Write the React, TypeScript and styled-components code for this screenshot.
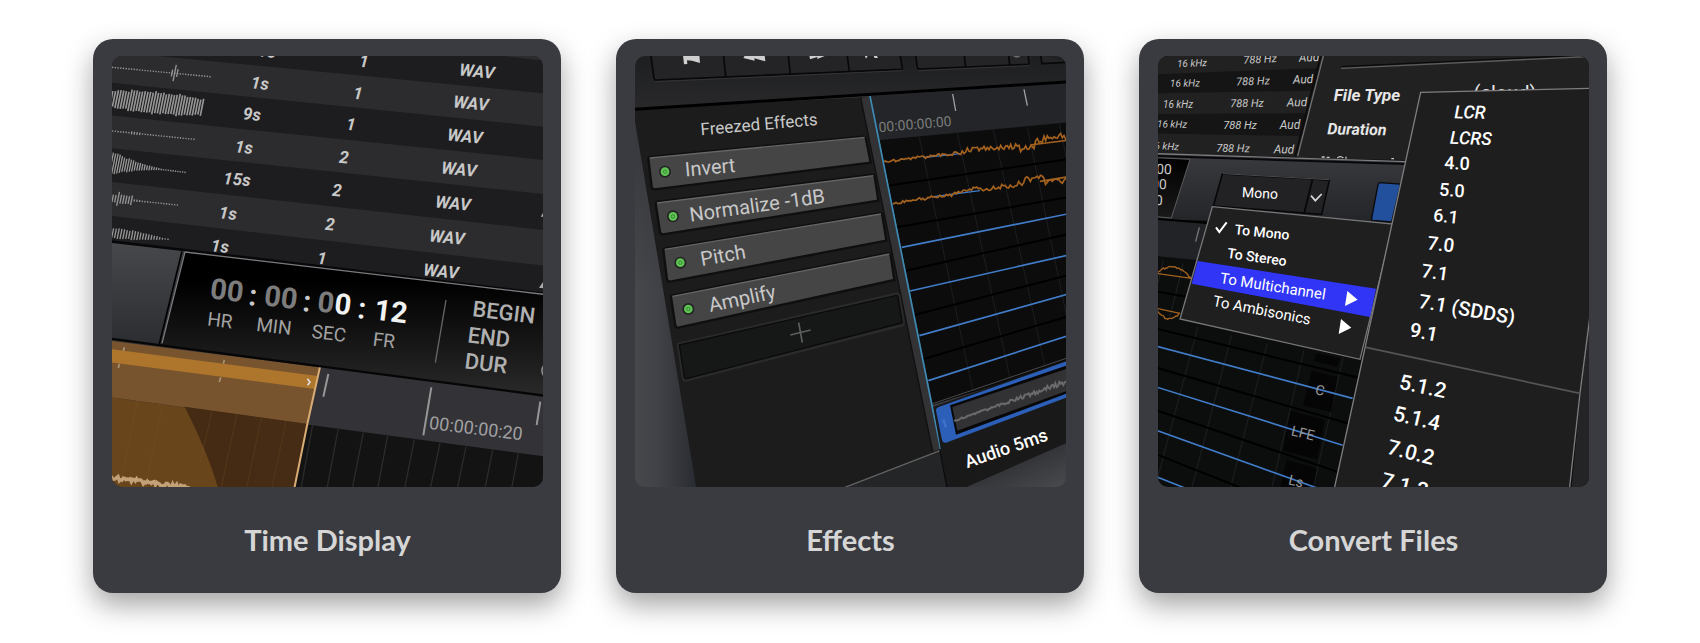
import React from "react";
import styled, { createGlobalStyle } from "styled-components";

const GlobalStyle = createGlobalStyle`
  * { box-sizing: border-box; }
  body { margin: 0; background: #fff; }
`;

const Gallery = styled.main`
  display: grid;
  grid-template-columns: repeat(3, minmax(0, 1fr));
  gap: 55px;
  padding: 39px 93px 50px;
`;

const Card = styled.article`
  display: flex;
  flex-direction: column;
  padding: 17px 18px 0 19px;
  border-radius: 20px;
  background: #3a3b40;
  box-shadow: 0 12px 28px rgba(0, 0, 0, 0.36);
`;

const Title = styled.h2`
  margin: 0;
  padding: 35px 0;
  font-family: Lato, "Open Sans", sans-serif;
  font-size: 29px;
  font-weight: 700;
  line-height: 36px;
  text-align: center;
  color: #d6d6d6;
`;

const Picture = styled.svg`
  display: block;
  width: 100%;
  height: auto;
  border-radius: 10px;
  font-family: Roboto, "Liberation Sans", sans-serif;
`;

interface InkProps {
  $size: number;
  $color: string;
  $weight: number;
  $italic: boolean;
}

const Ink = styled.text<InkProps>`
  font-size: ${(p) => p.$size}px;
  font-weight: ${(p) => p.$weight};
  font-style: ${(p) => (p.$italic ? "italic" : "normal")};
  fill: ${(p) => p.$color};
  text-anchor: middle;
`;

interface LabelProps {
  at: [number, number];
  turn?: number;
  size?: number;
  color?: string;
  weight?: number;
  italic?: boolean;
  children: string;
}

/* Text centred on a point and turned to the slope of its surface */
const Label = ({ at, turn = 0, size = 18, color = "#c8c8c8", weight = 400, italic = false, children }: LabelProps) => (
  <Ink
    transform={`translate(${at[0]} ${at[1]}) rotate(${turn})`}
    dy="0.36em"
    $size={size}
    $color={color}
    $weight={weight}
    $italic={italic}
  >
    {children}
  </Ink>
);

/* Shapes are drawn on a grid three times finer than the labels */
const Fine = ({ left, children }: { left: number; children: React.ReactNode }) => (
  <g transform={`translate(${-left} -26) scale(0.33333)`}>{children}</g>
);

type Pt = [number, number];

const noise = (i: number) => {
  const v = Math.sin(i * 12.9898 + 4.1) * 43758.5453;
  return v - Math.floor(v);
};

/* Leaning bars between two points, as tall as the envelope says */
const bars = (a: Pt, b: Pt, step: number, height: (t: number) => number, lean = 0.2) => {
  let d = "";
  const n = Math.floor((b[0] - a[0]) / step);
  for (let i = 0; i <= n; i++) {
    const t = i / n;
    const x = a[0] + (b[0] - a[0]) * t;
    const y = a[1] + (b[1] - a[1]) * t;
    const h = Math.max(2, height(t) * (0.85 + noise(i) * 0.25));
    d += `M${(x + h * lean).toFixed(1)} ${(y - h).toFixed(1)}L${(x - h * lean).toFixed(1)} ${(y + h).toFixed(1)}`;
  }
  return d;
};

/* A jagged trace along a line */
const trace = (a: Pt, b: Pt, step: number, offset: (t: number, i: number) => number) => {
  const n = Math.floor((b[0] - a[0]) / step);
  const pts: string[] = [];
  for (let i = 0; i <= n; i++) {
    const t = i / n;
    pts.push(`${(a[0] + (b[0] - a[0]) * t).toFixed(1)} ${(a[1] + (b[1] - a[1]) * t + offset(t, i)).toFixed(1)}`);
  }
  return "M" + pts.join("L");
};

const durations: [string, number, number][] = [
  ["1s", 156, -5], ["1s", 149, 27], ["9s", 141, 58], ["1s", 133, 91], ["15s", 126, 123], ["1s", 117, 157], ["1s", 109, 190],
];
const channels: [string, number, number][] = [
  ["1", 253, 5], ["1", 247, 37], ["1", 240, 68], ["2", 233, 101], ["2", 226, 134], ["2", 219, 168], ["1", 211, 202],
];
const formats: Pt[] = [[366, 15], [360, 47], [354, 80], [348, 113], [342, 147], [336, 181], [330, 215]];

const TimePicture = () => (
  <Picture viewBox="1 0 431 431" role="img" aria-label="Time display">
    <defs>
      <linearGradient id="tdPanel" x1="0" y1="0" x2="0" y2="1">
        <stop offset="0.2" stopColor="#000" />
        <stop offset="1" stopColor="#2a2a2a" />
      </linearGradient>
      <linearGradient id="tdBar" x1="0" y1="0" x2="0" y2="1">
        <stop offset="0" stopColor="#47484c" />
        <stop offset="1" stopColor="#2c2d31" />
      </linearGradient>
    </defs>
    <Fine left={21}>
      <rect x="60" y="70" width="1310" height="1310" fill="#1d1d1f" />
      <path d="M60 64L1370 191V291L60 158ZM60 256L1370 391V493L60 354ZM60 455L1370 601V708L60 557ZM1240 78H1370V93Z" fill="#2c2c2e" />
      <g stroke="#969696" strokeWidth="4" fill="none">
        <path d={bars([68, 112], [360, 140], 8, () => 2)} />
        <path d={bars([246, 129], [262, 129], 8, (t) => (t > 0.4 && t < 0.6 ? 26 : 11))} />
        <path d={bars([64, 206], [336, 232], 8, (t) => 24 + 9 * Math.sin(t * 3.1))} strokeWidth="5" />
        <path d={bars([68, 303], [312, 328], 8, (t) => (t > 0.2 && t < 0.35 ? 4 : 2))} />
        <path d={bars([64, 400], [285, 427], 7, (t) => 34 * Math.pow(1 - t, 2.2))} />
        <path d={bars([68, 505], [262, 525], 8, (t) => (t < 0.06 ? 12 : t < 0.12 ? 20 : t < 0.3 ? 13 : 5 * (1 - t)))} />
        <path d={bars([68, 609], [234, 628], 8, (t) => 15 * (1 - t * t))} />
      </g>
    </Fine>
    {durations.map(([t, x, y]) => <Label key={y} at={[x, y]} turn={5} size={17} weight={700} italic>{t}</Label>)}
    {channels.map(([t, x, y]) => <Label key={y} at={[x, y]} turn={5} size={17} weight={700} italic>{t}</Label>)}
    {formats.map(([x, y]) => <Label key={y} at={[x, y]} turn={6} size={17} weight={700} italic>WAV</Label>)}
    <Fine left={21}>
      <path d="M1362 544L1352 560H1370ZM1362 752L1347 773L1370 777Z" fill="#aaa" />
      <path d="M60 636L283 662L215 945L60 930Z" fill="url(#tdBar)" />
      <path d="M60 634L283 660L1370 792" stroke="#08080a" strokeWidth="8" fill="none" />
      <path d="M285 666L1370 796V1102L213 944Z" fill="url(#tdPanel)" />
      <path d="M1370 794L285 666L216 940" stroke="#7a7a7e" strokeWidth="4" fill="none" />
      <path d="M276 664L208 942" stroke="#000" strokeWidth="5" />
      <path d="M1068 810L1036 998" stroke="#666" strokeWidth="4" />
      <path d="M60 928L1370 1098V1380H60Z" fill="#333237" />
      <path d="M640 1182L1370 1280V1380H600Z" fill="#131313" />
      <path d="M668 1185L632 1380M745 1195L710 1380M820 1207L786 1380M893 1217L862 1380M973 1228L943 1380M1050 1239L1020 1380M1128 1250L1101 1380M1208 1260L1184 1380M1285 1270L1264 1380" stroke="#2b2b2b" strokeWidth="4" />
      <path d="M60 932L690 1012L652 1182L60 1102Z" fill="#77542d" />
      <path d="M60 957L683 1038L674 1077L60 997Z" fill="#ae762d" />
      <path d="M60 1102L652 1182L612 1380H60Z" fill="#68451c" />
      <path d="M284 1130L652 1182L612 1380H386Q355 1270 284 1130Z" fill="#462c14" />
      <path d="M142 1112L90 1372M218 1122L166 1372M440 1154L394 1372M514 1164L470 1372M588 1174L546 1372M366 1144L330 1300" stroke="#8a6232" strokeWidth="3" opacity="0.2" />
      <path d="M103 952L100 963M88 1002L85 1014M403 990L400 1001M392 1042L388 1056" stroke="#a89474" strokeWidth="5" />
      <path d={trace([60, 1342], [300, 1374], 4, (_, i) => (noise(i) - 0.5) * 14)} stroke="#c2a078" strokeWidth="10" fill="none" />
      <path d="M652 1046L660 1056L653 1066" stroke="#ddd" strokeWidth="5" fill="none" />
      <path d="M690 1010L652 1182L612 1380" stroke="#d8ac74" strokeWidth="6" fill="none" />
      <path d="M60 926L1370 1098" stroke="#060606" strokeWidth="7" />
      <path d="M715 1032L700 1100M1024 1072L1000 1216M1351 1115L1340 1185" stroke="#969696" strokeWidth="6" />
      <path d="M1364 1004Q1350 1018 1360 1036" stroke="#8a8a8a" strokeWidth="5" fill="none" />
    </Fine>
    <Label at={[116, 234]} turn={7} size={29} weight={700} color="#7d7d7d">00</Label>
    <Label at={[142, 239]} turn={7} size={29} weight={700} color="#c9c9c9">:</Label>
    <Label at={[170, 241]} turn={7} size={29} weight={700} color="#7d7d7d">00</Label>
    <Label at={[196, 245]} turn={7} size={29} weight={700} color="#c9c9c9">:</Label>
    <Label at={[215, 246]} turn={7} size={29} weight={700} color="#7d7d7d">0</Label>
    <Label at={[232, 248]} turn={7} size={29} weight={700} color="#f2f2f2">0</Label>
    <Label at={[251, 252]} turn={7} size={29} weight={700} color="#f2f2f2">:</Label>
    <Label at={[280, 255]} turn={7} size={29} weight={700} color="#f2f2f2">12</Label>
    <Label at={[109, 264]} turn={7} size={19} color="#a2a2a2">HR</Label>
    <Label at={[163, 270]} turn={7} size={19} color="#a2a2a2">MIN</Label>
    <Label at={[218, 277]} turn={7} size={19} color="#a2a2a2">SEC</Label>
    <Label at={[273, 284]} turn={7} size={19} color="#a2a2a2">FR</Label>
    <Label at={[393, 256]} turn={7} size={22} weight={500} color="#b0b0b0">BEGIN</Label>
    <Label at={[378, 281]} turn={7} size={22} weight={500} color="#b0b0b0">END</Label>
    <Label at={[375, 307]} turn={7} size={22} weight={500} color="#b0b0b0">DUR</Label>
    <Label at={[365, 372]} turn={7} color="#a0a0a0">00:00:00:20</Label>
  </Picture>
);

const effectRows = [
  { box: "M115 385Q115 382 120 381L758 320Q766 319 768 326L782 398L134 478Q127 478 125 470Z", top: "M119 384L764 322", led: [165, 425] },
  { box: "M137 520Q137 517 142 516L785 434Q792 434 794 440L805 512L159 613Q152 613 150 606Z", top: "M141 519L790 437", led: [189, 559] },
  { box: "M160 660Q160 657 165 655L808 550Q815 549 817 556L829 632L180 755Q173 755 171 748Z", top: "M164 658L813 552", led: [211, 698] },
  { box: "M183 801Q183 797 188 796L833 670Q840 669 842 676L853 750L205 893Q198 894 196 887Z", top: "M187 799L838 672", led: [235, 837] },
];

const EffectsPicture = () => (
  <Picture viewBox="1 0 431 431" role="img" aria-label="Effects">
    <defs>
      <linearGradient id="fxSide" x1="0" y1="0" x2="1" y2="0">
        <stop offset="0" stopColor="#48494c" />
        <stop offset="0.4" stopColor="#414247" />
        <stop offset="1" stopColor="#272a30" />
      </linearGradient>
      <linearGradient id="fxShade" x1="0" y1="0" x2="0" y2="1">
        <stop offset="0" stopColor="#34353a" />
        <stop offset="0.5" stopColor="#34353a" stopOpacity="0" />
      </linearGradient>
      <linearGradient id="fxBar" x1="0" y1="0" x2="0" y2="1">
        <stop offset="0" stopColor="#1d1e20" />
        <stop offset="1" stopColor="#29292c" />
      </linearGradient>
      <linearGradient id="fxCorner" x1="0" y1="0" x2="1" y2="1">
        <stop offset="0.2" stopColor="#26272a" />
        <stop offset="1" stopColor="#4b4c50" />
      </linearGradient>
    </defs>
    <Fine left={24}>
      <rect x="66" y="200" width="200" height="1180" fill="url(#fxSide)" />
      <rect x="66" y="200" width="200" height="1180" fill="url(#fxShade)" />
      <path d="M66 70H1372V157L66 238Z" fill="url(#fxBar)" />
      <g fill="#242426" stroke="#080808" strokeWidth="5">
        <path d="M122 70L132 145Q133 151 140 150L872 118Q878 117 877 112L869 70Z" />
        <path d="M340 70L347 140M534 70L541 132M711 70L718 124" />
        <path d="M916 70L922 112Q923 118 930 117L1252 103Q1258 102 1257 97L1253 70Z" />
        <path d="M1062 70L1067 111M1195 70L1199 105M1291 70L1296 101L1372 97" />
      </g>
      <path d="M135 155L876 122M926 122L1258 107" stroke="#343436" strokeWidth="3" />
      <path d="M219 76L222 103L232 102L231 91L246 92L270 99L268 76ZM400 84L434 92L433 85L466 94L464 76H405ZM598 76L600 88L622 81V87L644 78V76ZM764 76L768 86L774 76ZM790 76L794 84L804 84L800 76Z" fill="#cfcfcf" />
      <path d="M1207 76Q1220 90 1234 76Z" fill="#6a6a6a" />
      <path d="M66 238L778 200L992 1257L1012 1380H260L73 262Z" fill="#1c1c1c" />
      <path d="M752 203L778 200L992 1257L968 1264Z" fill="#333335" />
      <path d="M752 203L968 1264" stroke="#101010" strokeWidth="4" />
      <path d="M780 198L1372 160V278L808 330Z" fill="#232528" />
      <path d="M808 330L1372 277V1000L968 1124Z" fill="#0c0c0d" />
      <path d="M928 322L1088 1080M1042 310L1200 1045M1150 300L1305 1010M1252 292L1372 870M1348 282L1372 398" stroke="#1c1e20" strokeWidth="3" />
      <path d="M832 467L1372 388M860 592L1372 502M887 722L1372 613M912 855L1372 736M938 988L1372 860" stroke="#000" strokeWidth="6" />
      <path d="M968 1121L1372 984" stroke="#4a4a4a" strokeWidth="3" />
      <path d="M875 652L1372 552M900 783L1372 676M928 917L1372 793M955 1052L1372 918" stroke="#417cc8" strokeWidth="5" />
      <path d="M940 383L1050 371M970 500L1110 482" stroke="#417cc8" strokeWidth="4" />
      <path
        d={trace([822, 395], [1372, 330], 5, (t, i) => (noise(i) - 0.5) * (7 + 14 * t) + (t > 0.82 ? -12 : t > 0.74 ? 10 : t > 0.45 && t < 0.6 ? -6 : 0)) + "M1260 345L1372 331"}
        stroke="#a4621f" strokeWidth="5" fill="none"
      />
      <path
        d={trace([848, 520], [1372, 441], 5, (t, i) => (noise(i + 90) - 0.5) * (7 + 14 * t) + (t > 0.87 ? 10 : t > 0.75 ? -12 : t > 0.4 && t < 0.5 ? -6 : 0)) + "M1290 454L1372 441"}
        stroke="#a4621f" strokeWidth="5" fill="none"
      />
      <path d="M780 198L992 1257" stroke="#3d8ab4" strokeWidth="5" />
      <path d="M1028 192L1037 243M1242 178L1252 227" stroke="#a0a0a0" strokeWidth="4" />
      <path d="M66 238L1372 156" stroke="#000" strokeWidth="9" />
      <path d="M970 1130L1372 990V1243L1050 1380H1012L992 1257Z" fill="#191919" />
      <path d="M988 1130L1372 993V1102L1008 1238Q998 1240 996 1230L978 1142Q977 1134 988 1130Z" fill="#2b5fb8" />
      <path d="M1020 1126L1372 1006V1090L1038 1214Z" fill="#080808" />
      <path d="M1027 1131L1372 1016V1082L1042 1202Z" fill="#323234" />
      <path d="M1000 1168L1008 1192" stroke="#3f74cf" strokeWidth="7" />
      <path d={trace([1032, 1173], [1372, 1053], 4, (t, i) => (noise(i) - 0.5) * (4 + 12 * t))} stroke="#6a6a6a" strokeWidth="6" fill="none" />
      <path d="M1372 1238L1050 1380H1372Z" fill="url(#fxCorner)" />
      <path d="M990 1260L695 1374V1380H1012Z" fill="#232527" />
      <path d="M990 1262L695 1376" stroke="#626262" strokeWidth="4" />
      <path d="M990 1260L1012 1380" stroke="#0c0c0c" strokeWidth="4" />
      {effectRows.map((row) => (
        <g key={row.box}>
          <path d={row.box} fill="#454546" stroke="#0f0f0f" strokeWidth="7" />
          <path d={row.top} stroke="#666" strokeWidth="4" />
          <circle cx={row.led[0]} cy={row.led[1]} r="18" fill="#222" />
          <circle cx={row.led[0]} cy={row.led[1]} r="13" fill="#5fc454" />
          <circle cx={row.led[0]} cy={row.led[1]} r="5" fill="none" stroke="#3a8a34" strokeWidth="3" />
        </g>
      ))}
      <path d="M205 943L856 793Q864 790 867 797L880 878Q881 884 874 886L230 1050Q222 1052 220 1045Z" fill="#161817" stroke="#2a2a2a" strokeWidth="9" />
      <path d="M208 945L856 797Q862 795 864 800L877 878L230 1046Q224 1047 223 1042Z" fill="#161817" stroke="#0b0b0b" strokeWidth="4" />
      <path d="M541 915L602 900M566 878L577 938" stroke="#5e5e5e" strokeWidth="5" />
    </Fine>
    <Label at={[125, 68]} turn={-5} size={17}>Freezed Effects</Label>
    <Label at={[76, 111]} turn={-5} size={20}>Invert</Label>
    <Label at={[123, 149]} turn={-8} size={20}>Normalize -1dB</Label>
    <Label at={[89, 199]} turn={-10} size={20}>Pitch</Label>
    <Label at={[108, 242]} turn={-12} size={20}>Amplify</Label>
    <Label at={[281, 68]} turn={-5} size={14} color="#7b7b7b">00:00:00:00</Label>
    <Label at={[372, 392]} turn={-19} size={18} weight={500} color="#fff">Audio 5ms</Label>
  </Picture>
);

const rateRows: [Pt, Pt, Pt][] = [
  [[35, 7], [103, 3], [152, 1]],
  [[28, 27], [96, 25], [146, 23]],
  [[21, 48], [90, 47], [140, 46]],
  [[15, 68], [83, 69], [133, 69]],
  [[7, 90], [76, 92], [127, 93]],
];

const layouts: [string, number, number, number, number][] = [
  ["4.0", 300, 107, 3, 18], ["5.0", 295, 134, 4, 18], ["6.1", 289, 160, 6, 18], ["7.0", 284, 188, 7, 19],
  ["7.1", 278, 216, 8, 19], ["7.1 (SDDS)", 310, 253, 10, 20], ["9.1", 267, 276, 11, 20],
  ["5.1.2", 266, 330, 12, 21], ["5.1.4", 260, 362, 13, 21], ["7.0.2", 254, 396, 14, 21], ["7.1.2", 248, 429, 14, 21],
];

const ConvertPicture = () => (
  <Picture viewBox="1 0 431 431" role="img" aria-label="Convert files">
    <defs>
      <linearGradient id="cvBar" x1="0" y1="0" x2="0" y2="1">
        <stop offset="0" stopColor="#393a3e" />
        <stop offset="1" stopColor="#232427" />
      </linearGradient>
      <linearGradient id="cvTime" x1="0" y1="0" x2="0" y2="1">
        <stop offset="0" stopColor="#000" />
        <stop offset="1" stopColor="#1a1a1a" />
      </linearGradient>
    </defs>
    <Fine left={27}>
      <rect x="76" y="70" width="1310" height="1310" fill="#0c0d0d" />
      <path d="M76 70H590L505 380L76 372Z" fill="#212121" />
      <path d="M76 133L570 114L552 182L76 190ZM76 252L535 250L516 318L76 310Z" fill="#151515" />
    </Fine>
    {rateRows.map(([rate, pitch, name], i) => (
      <g key={i}>
        <Label at={rate} turn={i - 2} size={10} italic>16 kHz</Label>
        <Label at={pitch} turn={i - 3} size={11} italic>788 Hz</Label>
        <Label at={name} turn={i - 3} size={12} italic>Aud</Label>
      </g>
    ))}
    <Fine left={27}>
      <path d="M580 70H1386V400L500 384Z" fill="#212121" />
      <path d="M574 70L496 378" stroke="#0d0d0d" strokeWidth="6" />
      <path d="M582 70L503 378" stroke="#707072" strokeWidth="4" />
      <path d="M633 110L1386 74" stroke="#0a0a0a" strokeWidth="4" />
      <path d="M633 115L1386 79" stroke="#5c5c5c" strokeWidth="4" />
    </Fine>
    <Label at={[210, 39]} size={17} weight={700} color="#e6e6e6" italic>File Type</Label>
    <Label at={[200, 73]} turn={1} size={16} weight={700} color="#e6e6e6" italic>Duration</Label>
    <Label at={[348, 37]} size={20} color="#e6e6e6">(cloud)</Label>
    <Fine left={27}>
      <path d="M575 381H584M590 382H599M622 384Q630 376 640 384M648 380V386M784 386H792" stroke="#c8c8c8" strokeWidth="4" fill="none" />
      <path d="M76 374L830 396V584L76 568Z" fill="url(#cvBar)" />
      <path d="M76 378L830 402" stroke="#08080a" strokeWidth="6" />
      <path d="M76 371L830 395" stroke="#7d7d80" strokeWidth="4" />
      <path d="M76 383L180 388L124 564L76 560Z" fill="url(#cvTime)" stroke="#5b5b5d" strokeWidth="3" />
      <path d="M76 566L240 580V694L76 678Z" fill="#222326" />
      <path d="M76 566L240 580" stroke="#000" strokeWidth="6" />
      <path d="M208 592L197 635" stroke="#777" strokeWidth="4" />
      <path d="M100 690L84 760M160 700L120 860" stroke="#202224" strokeWidth="3" />
      <path d={trace([76, 729], [185, 745], 4, (t, i) => -26 * Math.sin(t * 3.14) + (noise(i) - 0.5) * 6) + "M76 730L185 745"} stroke="#a4621f" strokeWidth="4" fill="none" />
      <path d={trace([76, 834], [150, 850], 4, (t, i) => 24 * Math.sin(t * 3.14) + (noise(i) - 0.5) * 6) + "M76 834L150 850"} stroke="#a4621f" strokeWidth="4" fill="none" />
      <path d="M277 432L548 447L523 549L250 528Z" fill="#222224" stroke="#08080a" strokeWidth="5" />
      <path d="M548 447L598 451L575 553L523 549Z" fill="#222224" stroke="#08080a" strokeWidth="5" />
      <path d="M279 431L598 449" stroke="#4b4b4e" strokeWidth="3" />
      <path d="M543 497L556 512L575 492" stroke="#d6d6d6" strokeWidth="5" fill="none" />
      <path d="M750 458L812 462L785 576L728 571Q723 570 725 564L744 464Q745 458 750 458Z" fill="#22509c" stroke="#0a0a0c" strokeWidth="4" />
      <path d="M204 890L76 1370M305 915L184 1380M412 940L300 1380M522 960L424 1380M640 980L548 1380" stroke="#1a1c1d" strokeWidth="4" />
      <path d="M76 784L170 800M76 895L690 1044M76 1012L660 1182M76 1140L630 1328M76 1272L350 1380" stroke="#000" strokeWidth="6" />
      <path d="M560 970L628 985L622 1010L550 992ZM545 1022L622 1042L604 1146L520 1126ZM482 1142L584 1170L562 1288L458 1262ZM470 1290L560 1315L548 1380H450Z" fill="#050505" />
      <path d="M76 948L668 1105M76 1070L638 1246M76 1200L578 1380M76 1339L180 1380" stroke="#417cc8" strokeWidth="5" />
      <path d="M247 530L790 582L690 988L150 867Z" fill="#1f1f1f" stroke="#777779" strokeWidth="4" />
      <path d="M203 693L738 776L720 861L185 761Z" fill="#3035f6" />
      <path d="M258 592L268 606L290 577" stroke="#fff" strokeWidth="6" fill="none" />
      <path d="M652 783L683 809L645 828ZM633 867L664 893L626 912Z" fill="#fff" />
      <path d="M1376 890L1352 1090L1324 1380H1386V890Z" fill="#242426" />
      <path d="M872 187L1390 175V780L1350 1090L1318 1380H612Z" fill="#1e1e1e" stroke="#7e7e80" strokeWidth="4" />
      <path d="M708 952L1350 1090" stroke="#545456" strokeWidth="5" />
    </Fine>
    <Label at={[7, 113]} turn={2} size={14}>00</Label>
    <Label at={[2, 128]} turn={2} size={14}>00</Label>
    <Label at={[-2, 144]} turn={2} size={14}>00</Label>
    <Label at={[103, 137]} turn={3} size={14} color="#fff">Mono</Label>
    <Label at={[105, 176]} turn={6} size={14} weight={500} color="#fff">To Mono</Label>
    <Label at={[100, 201]} turn={8} size={14} weight={500} color="#fff">To Stereo</Label>
    <Label at={[116, 230]} turn={9} size={15} color="#fff">To Multichannel</Label>
    <Label at={[105, 254]} turn={11} size={15} color="#fff">To Ambisonics</Label>
    <Label at={[163, 334]} turn={13} size={14} color="#9a9a9a">C</Label>
    <Label at={[146, 377]} turn={13} size={14} color="#9a9a9a">LFE</Label>
    <Label at={[139, 425]} turn={13} size={14} color="#9a9a9a">Ls</Label>
    <Label at={[313, 56]} turn={1} color="#fff" weight={500} italic>LCR</Label>
    <Label at={[314, 82]} turn={2} color="#fff" weight={500} italic>LCRS</Label>
    {layouts.map(([name, x, y, turn, size]) => (
      <Label key={name} at={[x, y]} turn={turn} size={size} weight={500} color="#fff">{name}</Label>
    ))}
  </Picture>
);

const App = () => (
  <>
    <GlobalStyle />
    <Gallery>
      <Card>
        <TimePicture />
        <Title>Time Display</Title>
      </Card>
      <Card>
        <EffectsPicture />
        <Title>Effects</Title>
      </Card>
      <Card>
        <ConvertPicture />
        <Title>Convert Files</Title>
      </Card>
    </Gallery>
  </>
);

export default App;
